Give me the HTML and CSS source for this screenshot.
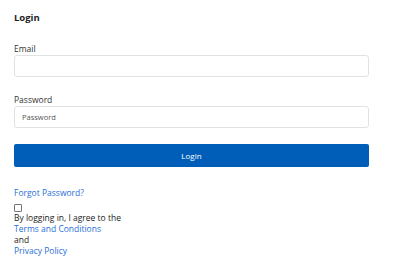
FILE: index.html
```html
<!DOCTYPE html>
<html lang="en">
<head>
    <meta charset="UTF-8">
    <title>Login</title>
    <link rel="stylesheet" href="styles.css">
</head>
<body>
    <main class="login">
        <h1>Login</h1>
        <form class="login-form">
            <div class="field">
                <label for="email">Email</label>
                <input type="email" id="email">
            </div>
            <div class="field">
                <label for="password">Password</label>
                <input type="password" id="password" placeholder="Password">
            </div>
            <button type="button" class="btn">Login</button>
        </form>
        <a href="#" class="link forgot">Forgot Password?</a>
        <div class="agree">
            <input type="checkbox" id="agree">
            <div>By logging in, I agree to the</div>
            <a href="#" class="link">Terms and Conditions</a>
            <div>and</div>
            <a href="#" class="link">Privacy Policy</a>
        </div>
    </main>
</body>
</html>
```

FILE: styles.css
```css
* {
    margin: 0;
    padding: 0;
    box-sizing: border-box;
}

body {
    font-family: "Open Sans", "Noto Sans", sans-serif;
    font-size: 8.5px;
    line-height: 11px;
    color: #222222;
    background: #ffffff;
    padding: 12px 14px;
}

.login {
    width: 355px;
}

.login h1 {
    font-size: 9.5px;
    font-weight: 700;
    line-height: 12px;
    margin-bottom: 19px;
}

.field {
    display: flex;
    flex-direction: column;
    margin-bottom: 17px;
}

.field label {
    line-height: 11px;
    margin-bottom: 1px;
    color: #333333;
}

.field input {
    height: 22px;
    border: 1px solid #e2e2e2;
    border-radius: 3px;
    padding: 0 7px;
    font-family: inherit;
    font-size: 7.5px;
    outline: none;
}

.field input::placeholder {
    color: #555555;
}

.field:last-of-type {
    margin-bottom: 16px;
}

.btn {
    width: 100%;
    height: 23px;
    border: none;
    border-radius: 2px;
    background: #005eb8;
    color: #ffffff;
    font-family: inherit;
    font-size: 8px;
}

.link {
    color: #2a6fd6;
    text-decoration: none;
    display: block;
    line-height: 11px;
}

.forgot {
    margin-top: 20px;
}

.agree {
    margin-top: 6px;
    line-height: 11px;
}

.agree input {
    display: block;
    appearance: none;
    width: 8px;
    height: 8px;
    border: 1px solid #767676;
    border-radius: 1px;
    background: #ffffff;
}
```
